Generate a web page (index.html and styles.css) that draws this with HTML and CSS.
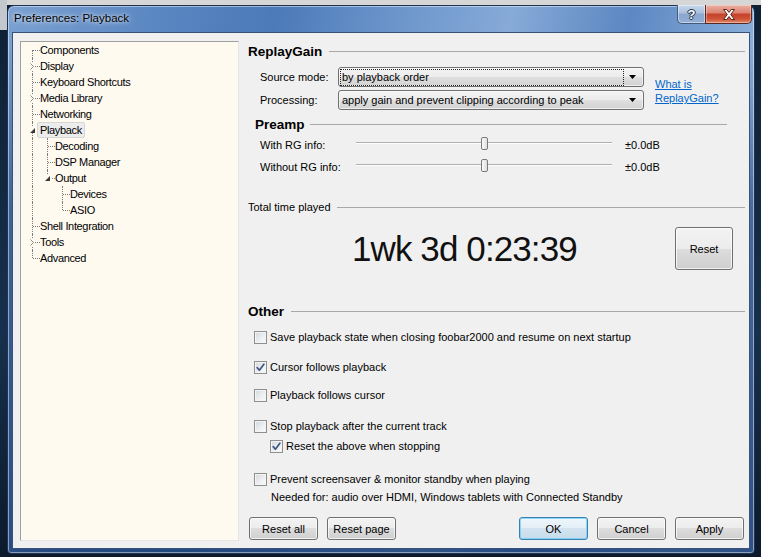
FILE: index.html
```html
<!DOCTYPE html>
<html>
<head>
<meta charset="utf-8">
<title>Preferences: Playback</title>
<link rel="stylesheet" href="styles.css">
</head>
<body>
<div class="desktop">
  <div class="window">
    <div class="titlebar">
      <span class="title">Preferences: Playback</span>
      <div class="caption-btns">
        <span class="cb help">?</span>
        <span class="cb close"><svg width="14" height="11" viewBox="0 0 14 11"><path d="M1.5 0.5h3.2l2.3 2.9 2.3-2.9h3.2l-3.8 5 3.8 5h-3.2l-2.3-2.9-2.3 2.9h-3.2l3.8-5z" fill="#fff" stroke="#5a231b" stroke-width="1" stroke-linejoin="round"/></svg></span>
      </div>
    </div>
    <div class="client">
      <div class="tree">
        <div class="row"><span class="cell c first"></span><span class="label">Components</span></div>
        <div class="row"><span class="cell c"><span class="exp"><svg width="4" height="7" viewBox="0 0 4 7"><path d="M0.5 0.5L3.5 3.5L0.5 6.5" fill="none" stroke="#8c8c8c"/></svg></span></span><span class="label">Display</span></div>
        <div class="row"><span class="cell c"></span><span class="label">Keyboard Shortcuts</span></div>
        <div class="row"><span class="cell c"><span class="exp"><svg width="4" height="7" viewBox="0 0 4 7"><path d="M0.5 0.5L3.5 3.5L0.5 6.5" fill="none" stroke="#8c8c8c"/></svg></span></span><span class="label">Media Library</span></div>
        <div class="row"><span class="cell c"></span><span class="label">Networking</span></div>
        <div class="row"><span class="cell c"><span class="exp open"><svg width="5" height="5" viewBox="0 0 5 5"><path d="M5 0V5H0Z" fill="#3a3a3a"/></svg></span></span><span class="label selected">Playback</span></div>
        <div class="row"><span class="cell v"></span><span class="cell c"></span><span class="label">Decoding</span></div>
        <div class="row"><span class="cell v"></span><span class="cell c"></span><span class="label">DSP Manager</span></div>
        <div class="row"><span class="cell v"></span><span class="cell c last"><span class="exp open"><svg width="5" height="5" viewBox="0 0 5 5"><path d="M5 0V5H0Z" fill="#3a3a3a"/></svg></span></span><span class="label">Output</span></div>
        <div class="row"><span class="cell v"></span><span class="cell"></span><span class="cell c"></span><span class="label">Devices</span></div>
        <div class="row"><span class="cell v"></span><span class="cell"></span><span class="cell c last"></span><span class="label">ASIO</span></div>
        <div class="row"><span class="cell c"></span><span class="label">Shell Integration</span></div>
        <div class="row"><span class="cell c"><span class="exp"><svg width="4" height="7" viewBox="0 0 4 7"><path d="M0.5 0.5L3.5 3.5L0.5 6.5" fill="none" stroke="#8c8c8c"/></svg></span></span><span class="label">Tools</span></div>
        <div class="row"><span class="cell c last"></span><span class="label">Advanced</span></div>
      </div>

      <div class="panel">
        <div class="group-head"><span class="ht">ReplayGain</span><span class="rule"></span></div>
        <div class="rg-body">
          <div class="rg-fields">
            <div class="field">
              <span class="lbl">Source mode:</span>
              <div class="combo focus"><span class="val">by playback order</span><span class="arrow"><svg width="7" height="4" viewBox="0 0 7 4"><path d="M0 0H7L3.5 4Z" fill="#000"/></svg></span></div>
            </div>
            <div class="field">
              <span class="lbl">Processing:</span>
              <div class="combo"><span class="val">apply gain and prevent clipping according to peak</span><span class="arrow"><svg width="7" height="4" viewBox="0 0 7 4"><path d="M0 0H7L3.5 4Z" fill="#000"/></svg></span></div>
            </div>
          </div>
          <a class="link" href="#">What is<br>ReplayGain?</a>
        </div>

        <div class="group-head sub"><span class="ht">Preamp</span><span class="rule"></span></div>
        <div class="slider-row first">
          <span class="slbl">With RG info:</span>
          <div class="track"><span class="thumb"></span></div>
          <span class="sval">±0.0dB</span>
        </div>
        <div class="slider-row">
          <span class="slbl">Without RG info:</span>
          <div class="track"><span class="thumb"></span></div>
          <span class="sval">±0.0dB</span>
        </div>

        <div class="group-head plain"><span class="ht">Total time played</span><span class="rule"></span></div>
        <div class="time-row">
          <span class="time">1wk 3d 0:23:39</span>
          <button class="btn reset-time">Reset</button>
        </div>

        <div class="group-head other"><span class="ht">Other</span><span class="rule"></span></div>
        <div class="chk mt8"><span class="box"></span><span>Save playback state when closing foobar2000 and resume on next startup</span></div>
        <div class="chk mt10"><span class="box checked"><svg width="11" height="11" viewBox="0 0 11 11"><path d="M2.2 5.6L4.4 8.2L8.9 2.2" fill="none" stroke="#3d5484" stroke-width="1.7" stroke-linecap="round" stroke-linejoin="round"/></svg></span><span>Cursor follows playback</span></div>
        <div class="chk mt8"><span class="box"></span><span>Playback follows cursor</span></div>
        <div class="chk mt11"><span class="box"></span><span>Stop playback after the current track</span></div>
        <div class="chk indent"><span class="box checked"><svg width="11" height="11" viewBox="0 0 11 11"><path d="M2.2 5.6L4.4 8.2L8.9 2.2" fill="none" stroke="#3d5484" stroke-width="1.7" stroke-linecap="round" stroke-linejoin="round"/></svg></span><span>Reset the above when stopping</span></div>
        <div class="chk mt13"><span class="box"></span><span>Prevent screensaver &amp; monitor standby when playing</span></div>
        <div class="note">Needed for: audio over HDMI, Windows tablets with Connected Standby</div>

        <div class="button-row">
          <button class="btn">Reset all</button>
          <button class="btn">Reset page</button>
          <button class="btn default push">OK</button>
          <button class="btn">Cancel</button>
          <button class="btn">Apply</button>
        </div>
      </div>
    </div>
  </div>
</div>
</body>
</html>
```

FILE: styles.css
```css
html, body {
  margin: 0;
  padding: 0;
}
body {
  font-family: "Liberation Sans", Arial, sans-serif;
  font-size: 11px;
  color: #000;
  background: #102238;
}
.desktop {
  width: 761px;
  height: 557px;
  box-sizing: border-box;
  padding: 5px 0 0 7px;
  overflow: hidden;
  background:
    linear-gradient(to right, #c3c8ce 0, #c3c8ce 7px, transparent 7px) 0 0 / 100% 30px no-repeat,
    linear-gradient(#d6d6d6 0, #d6d6d6 5px, #0f2034 5px, #16304d 60%, #0c1a2b 100%);
}
.window {
  width: 748px;
  height: 549px;
  box-sizing: border-box;
  border: 1px solid #1f3350;
  border-radius: 7px 7px 4px 4px;
  padding: 0 4px 4px 4px;
  display: flex;
  flex-direction: column;
  background:
    linear-gradient(to bottom, rgba(0,0,0,0) 0, rgba(0,0,0,0) 40px, rgba(20,55,110,0.55) 200px, rgba(20,55,110,0.75) 100%),
    linear-gradient(100deg, #7ba1d2 0%, #5a86c1 18%, #4c7ab8 32%, #6f98cd 48%, #87aad7 60%, #5c87c2 74%, #8cb0dc 90%, #7aa0d1 100%);
  box-shadow: inset 0 0 0 1px rgba(255,255,255,0.45);
}
.titlebar {
  height: 26px;
  flex: none;
  display: flex;
  justify-content: space-between;
  align-items: flex-start;
}
.title {
  margin-left: 2px;
  padding-top: 5px;
  line-height: 14px;
  font-size: 11.5px;
  color: #000;
  text-shadow: 0 0 6px rgba(255,255,255,0.8), 0 0 3px rgba(255,255,255,0.6);
}
.caption-btns {
  display: flex;
  margin-top: -1px;
  margin-right: -2px;
}
.cb {
  height: 19px;
  box-sizing: border-box;
  display: flex;
  align-items: center;
  justify-content: center;
}
.help {
  width: 28px;
  border: 1px solid #435a7a;
  border-top: none;
  border-right: none;
  border-radius: 0 0 0 5px;
  background: linear-gradient(#c9d8ec 0%, #a9bfdd 45%, #8ba6cf 50%, #93afd6 100%);
  box-shadow: inset 0 0 0 1px rgba(255,255,255,0.45);
  color: #fff;
  font-weight: bold;
  font-size: 13px;
  text-shadow: 0 0 1px #22324a, 1px 0 0 #22324a, -1px 0 0 #22324a, 0 1px 0 #22324a, 0 -1px 0 #22324a;
}
.close {
  width: 47px;
  border: 1px solid #5a2620;
  border-top: none;
  border-radius: 0 0 5px 0;
  background: linear-gradient(#eab0a3 0%, #dc8270 45%, #c5412c 50%, #cf5337 78%, #e48c6a 100%);
  box-shadow: inset 0 0 0 1px rgba(255,255,255,0.35);
}
.client {
  flex: 1;
  min-height: 0;
  display: flex;
  gap: 9px;
  box-sizing: border-box;
  border: 1px solid #38537a;
  background: #f0f0f0;
  padding: 8px 4px 7px 7px;
}

/* tree */
.tree {
  width: 219px;
  flex: none;
  box-sizing: border-box;
  border: 1px solid;
  border-color: #a0a0a0 #e6e6e6 #e6e6e6 #a0a0a0;
  background: #fffaf0;
  padding: 0 0 0 4px;
}
.row {
  display: flex;
  height: 16px;
}
.cell {
  width: 15px;
  flex: none;
  position: relative;
}
.cell.v::before,
.cell.c::before {
  content: "";
  position: absolute;
  left: 7px;
  top: 0;
  bottom: 0;
  border-left: 1px dotted #7d7d7d;
}
.cell.c.first::before { top: 8px; }
.cell.c.last::before { bottom: 8px; }
.cell.c::after {
  content: "";
  position: absolute;
  left: 8px;
  right: 0;
  top: 8px;
  border-top: 1px dotted #7d7d7d;
}
.exp {
  position: absolute;
  left: 5px;
  top: 4px;
  width: 5px;
  height: 8px;
  z-index: 1;
  background: #fffaf0;
  display: flex;
  align-items: center;
  justify-content: flex-start;
}
.exp.open {
  left: 5px;
  top: 5px;
  width: 6px;
  height: 6px;
}
.label {
  height: 16px;
  box-sizing: border-box;
  line-height: 14px;
  margin-left: -3px;
  padding: 0 2px;
  border: 1px solid transparent;
  border-radius: 2px;
  white-space: nowrap;
  letter-spacing: -0.35px;
  position: relative;
  z-index: 2;
}
.label.selected {
  background: #ececec;
  border-color: #d6d6d6;
}

/* panel */
.panel {
  width: 497px;
  flex: none;
  display: flex;
  flex-direction: column;
}
.group-head {
  display: flex;
  align-items: center;
  height: 20px;
  flex: none;
}
.group-head .ht {
  font-weight: bold;
  font-size: 13.5px;
  white-space: nowrap;
}
.group-head .rule {
  flex: 1;
  height: 1px;
  margin-left: 7px;
  background: #a8a8a8;
}
.group-head.sub {
  height: 16px;
  margin: 6px 18px 0 7px;
}
.group-head.sub .rule { margin-left: 5px; }
.group-head.plain {
  height: 16px;
  margin-top: 21px;
}
.group-head.plain .ht {
  font-weight: normal;
  font-size: 11px;
}
.group-head.plain .rule { margin-left: 6px; }
.group-head.other {
  height: 16px;
  margin-top: 33px;
}

.rg-body {
  display: flex;
  margin-top: 6px;
}
.rg-fields {
  display: flex;
  flex-direction: column;
  gap: 3px;
}
.field {
  display: flex;
  align-items: center;
  height: 20px;
}
.lbl {
  width: 78px;
  padding-left: 12px;
  flex: none;
}
.combo {
  width: 306px;
  height: 20px;
  box-sizing: border-box;
  border: 1px solid #707070;
  border-radius: 3px;
  background: linear-gradient(#f3f3f3 0%, #ececec 50%, #dfdfdf 50%, #d2d2d2 100%);
  box-shadow: inset 0 0 0 1px rgba(255,255,255,0.6);
  display: flex;
  align-items: center;
  padding-left: 1px;
}
.val {
  flex: 1;
  height: 17px;
  box-sizing: border-box;
  line-height: 15px;
  padding: 0 1px;
  border: 1px dotted transparent;
  white-space: nowrap;
  overflow: hidden;
}
.combo.focus .val {
  border-color: #222;
}
.arrow {
  width: 19px;
  flex: none;
  display: flex;
  align-items: center;
  justify-content: center;
  padding-right: 2px;
  box-sizing: border-box;
}
.link {
  margin-left: 11px;
  padding-top: 5px;
  align-self: center;
  line-height: 14px;
  color: #0066cc;
  text-decoration: underline;
}

.slider-row {
  display: flex;
  align-items: center;
  height: 22px;
}
.slider-row.first { margin-top: 2px; }
.slbl {
  width: 96px;
  padding-left: 12px;
  flex: none;
}
.track {
  width: 256px;
  height: 13px;
  position: relative;
  margin-top: -3px;
}
.track::before {
  content: "";
  position: absolute;
  left: 0;
  right: 0;
  top: 5px;
  height: 1px;
  background: #b0b0b0;
  border-bottom: 1px solid #fdfdfd;
}
.thumb {
  position: absolute;
  left: 125px;
  top: 0;
  width: 7px;
  height: 13px;
  box-sizing: border-box;
  border: 1px solid #7a7a7a;
  border-radius: 2px;
  background: linear-gradient(to right, #fafafa, #dedede);
}
.sval {
  margin-left: 13px;
}

.time-row {
  display: flex;
  align-items: center;
  height: 43px;
  margin-top: 12px;
}
.time {
  margin-left: 104px;
  font-size: 35px;
  letter-spacing: -0.9px;
  color: #111;
  line-height: 40px;
}
.btn {
  width: 69px;
  height: 23px;
  box-sizing: border-box;
  padding: 0;
  border: 1px solid #707070;
  border-radius: 3px;
  background: linear-gradient(#f3f3f3 0%, #ececec 50%, #dddddd 50%, #cfcfcf 100%);
  box-shadow: inset 0 0 0 1px rgba(255,255,255,0.7);
  font-family: "Liberation Sans", Arial, sans-serif;
  font-size: 11px;
  color: #000;
}
.btn.reset-time {
  width: 58px;
  height: 43px;
  margin-left: auto;
  margin-right: 12px;
}
.btn.default {
  border-color: #3c7fb1;
  background: linear-gradient(#eef6fb 0%, #e3eef6 50%, #d3e4f0 50%, #c6dbea 100%);
  box-shadow: inset 0 0 0 1px rgba(110,205,250,0.75);
}

.chk {
  display: flex;
  align-items: center;
  height: 20px;
  padding-left: 6px;
}
.chk.indent { padding-left: 22px; }
.mt8 { margin-top: 8px; }
.mt10 { margin-top: 10px; }
.mt11 { margin-top: 11px; }
.mt13 { margin-top: 13px; }
.box {
  width: 13px;
  height: 13px;
  flex: none;
  box-sizing: border-box;
  border: 1px solid #8e8f8f;
  margin-right: 3px;
  background: linear-gradient(135deg, #d4d7db 0%, #eceef0 55%, #fbfbfb 100%);
  box-shadow: inset 0 0 0 1px #f4f4f4;
  display: flex;
  align-items: center;
  justify-content: center;
}
.note {
  height: 16px;
  line-height: 16px;
  margin-left: 23px;
}
.button-row {
  display: flex;
  gap: 9px;
  margin-top: 12px;
  padding-left: 1px;
  padding-right: 1px;
}
.btn.push { margin-left: auto; }
```
